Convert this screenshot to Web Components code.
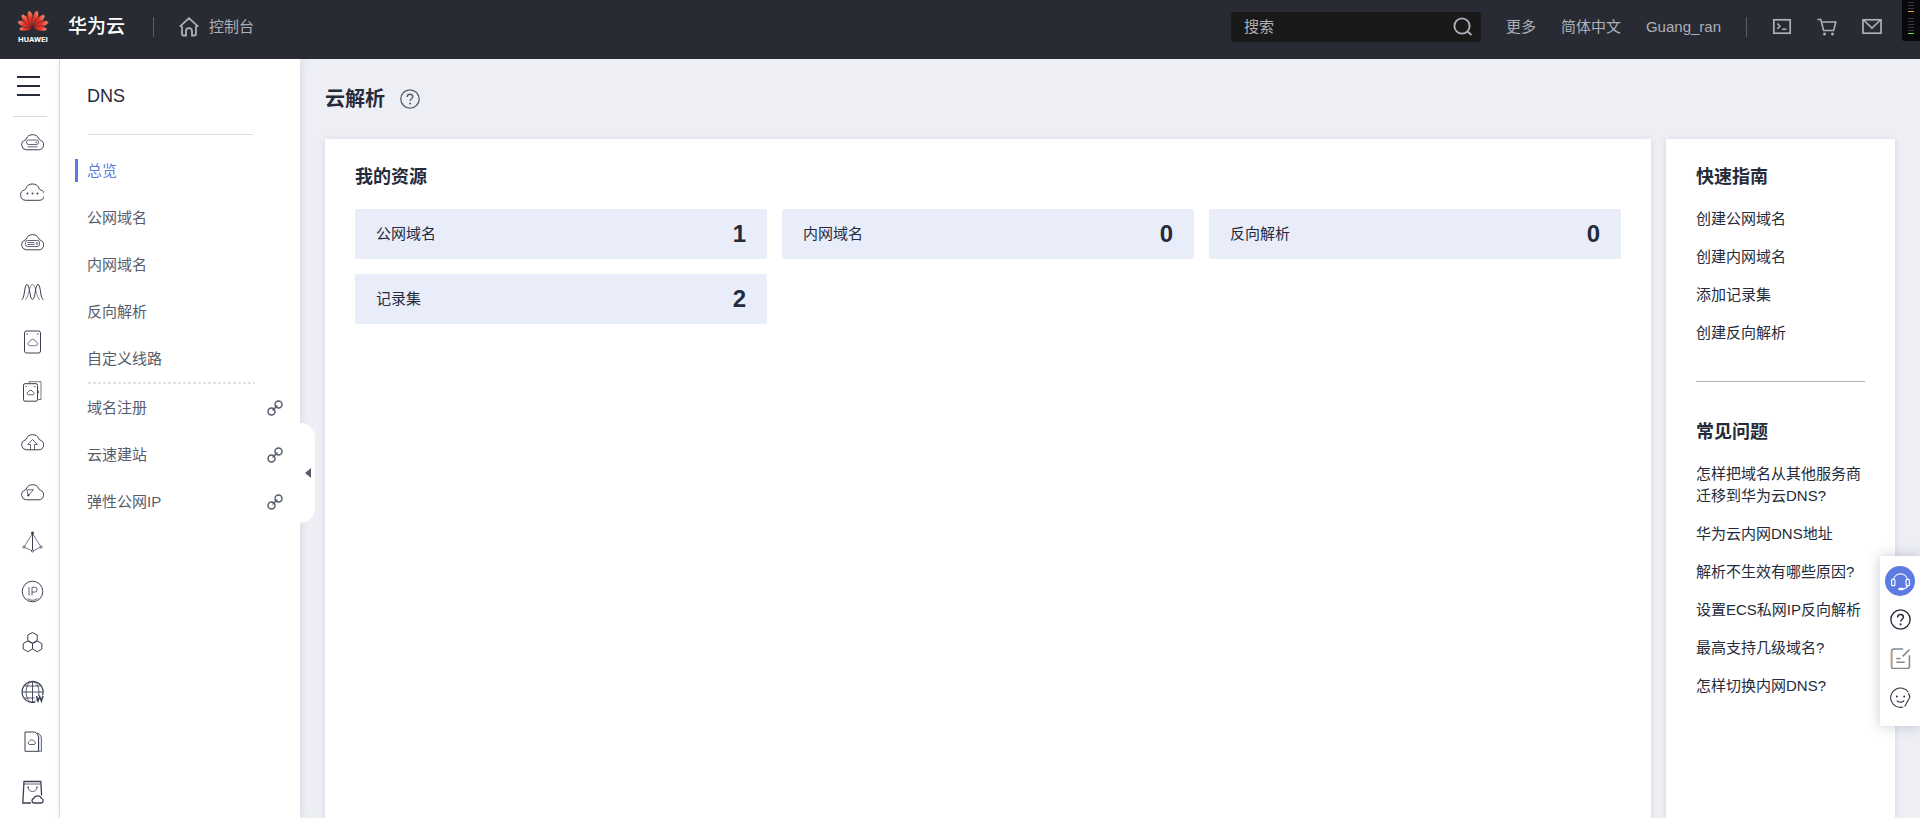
<!DOCTYPE html>
<html lang="zh-CN">
<head>
<meta charset="utf-8">
<title>云解析 - 控制台</title>
<style>
  html, body { margin: 0; min-height: 100%; }
  body {
    background: #eeeff5;
    color: #252b3a;
    font: 15px/22px "Liberation Sans", "Noto Sans CJK SC", sans-serif;
  }
</style>
</head>
<body>
<dns-console></dns-console>

<script>
const RESET = `
  *, *::before, *::after { box-sizing: border-box; }
  a { color: inherit; text-decoration: none; }
  button { border: 0; background: none; padding: 0; margin: 0; color: inherit; font: inherit; cursor: pointer; }
  ul { list-style: none; margin: 0; padding: 0; }
  h1, h2, p { margin: 0; font: inherit; }
  svg { display: block; fill: none; stroke: currentColor; }
`;

class BaseElement extends HTMLElement {
  connectedCallback() {
    if (this.shadowRoot) return;
    this.attachShadow({ mode: 'open' }).innerHTML = `<style>${RESET}${this.css()}</style>${this.html()}`;
  }
}

const CLOUD = 'M6.300 19.800h12.400a5 5 0 0 0 1.600-9.700 1.500 1.500 0 0 1-1.300-1.100A6.900 6.900 0 0 0 6.200 9 1.500 1.500 0 0 1 5 10.100a5 5 0 0 0 1.300 9.700z';

/* Each entry is [view box size, markup]. */
const ICONS = {
  home: [20, '<path stroke-width="1.800" d="M3 9v8.300a1.200 1.200 0 0 0 1.200 1.200H7v-4.300a3 3 0 0 1 6 0v4.300h2.800a1.200 1.200 0 0 0 1.200-1.200V9M.8 9.600 10 1.200l9.200 8.400"/>'],
  search: [20, '<circle cx="9" cy="9" r="7.600" stroke-width="1.900"/><path stroke-width="1.900" d="m14.500 14.500 4 3.500"/>'],
  terminal: [20, '<rect x="1.800" y="2.800" width="16.400" height="13.400" stroke-width="1.700"/><path stroke-width="1.500" d="m5.300 6.500 2.700 2.700-2.700 2.700M10 12.300H14.500"/>'],
  cart: [20, '<path stroke-width="1.600" d="M.5 2.500h3.300l2.800 11h10l2.200-8.500H5.500"/><circle cx="7.500" cy="17" r="1.500" fill="currentColor" stroke="none"/><circle cx="15.500" cy="17" r="1.500" fill="currentColor" stroke="none"/>'],
  mail: [20, '<rect x="1" y="2.800" width="18" height="13.400" stroke-width="1.700"/><path stroke-width="1.700" d="m1.500 3 8.500 8 8.500-8"/>'],
  link: [16, '<g stroke-width="1.500"><circle cx="4.500" cy="11.500" r="3.500"/><circle cx="11.500" cy="4.500" r="3.500"/><path d="m5.500 10.500 5-5"/></g>'],
  help: [20, '<circle cx="10" cy="10" r="9.200" stroke-width="1.300"/><path stroke-width="1.400" d="M7.200 8c0-1.700 1.200-2.700 2.800-2.700s2.800 1 2.800 2.500c0 1.900-2.700 2-2.700 4.200"/><circle cx="10.100" cy="14.600" r="1" fill="currentColor" stroke="none"/>'],
  ecs: [24, `<path d="${CLOUD}"/><rect x="6.500" y="10" width="12" height="4.500" rx="2" stroke-width=".8"/><path stroke-width=".8" d="M7.500 16.800h10"/><path d="M15.500 12.300h1.500"/>`],
  dots: [24, '<path d="M5.800 20.300h13.400a5.300 5.300 0 0 0 1.400-10.400 1.500 1.500 0 0 1-1.300-1.100 7.200 7.200 0 0 0-13.600 0 1.500 1.500 0 0 1-1.200 1.100 5.300 5.300 0 0 0 1.300 10.400z"/><g fill="currentColor" stroke="none"><circle cx="7.500" cy="13.500" r="1"/><circle cx="12.500" cy="13.500" r="1"/><circle cx="17.500" cy="13.500" r="1"/></g>'],
  bms: [24, `<path d="${CLOUD}"/><rect x="5.500" y="10.500" width="14" height="6" rx="2" stroke-width=".8"/><path stroke-width=".8" d="M7.500 12.500h7M7.500 14.500h7"/><circle cx="17" cy="13.500" r="1" stroke-width=".7"/>`],
  scaling: [24, '<path d="M1.500 19.500C5 19.500 4 4.500 7 4.500s2.500 15 5.500 15 2.500-15 5.500-15 2 15 5.500 15"/><path stroke-width=".6" d="M5 19.500c3.500 0 4-15 7.500-15s4 15 7.500 15"/>'],
  disk: [24, '<rect x="4.500" y="1" width="16" height="22" rx="2"/><path stroke-width=".7" d="M9.500 15.700h6.300a2 2 0 0 0 .3-3.900 3.500 3.500 0 0 0-6.600 0 2 2 0 0 0 0 3.900z"/><path d="M6.500 4h1.500M17 4h1.500"/>'],
  backup: [24, '<path stroke-width=".7" d="M9 3.500V1.700h12v17.800h-3"/><rect x="3.500" y="3.700" width="14" height="17.500" rx="1.500"/><path stroke-width=".8" d="M8 14.800h5.200a1.500 1.500 0 0 0 0-2.700 2.800 2.800 0 0 0-5.200 0 1.500 1.500 0 0 0 0 2.700zM18 10.500a2 2 0 0 1 0 2.800M5.500 6.500H7M14 6.500h1.500"/>'],
  upload: [24, `<path d="${CLOUD}"/><path stroke-width=".8" d="M10.500 19.500v-5H7.800l4.700-5 4.700 5h-2.700v5"/>`],
  cdn: [24, `<path d="${CLOUD}"/><path stroke-width=".8" d="m6.800 9 1.400 6.500 5.300-5.800-5.500.2"/><circle cx="8.300" cy="15.300" r=".7" fill="currentColor"/>`],
  pyramid: [24, '<path stroke-width=".7" d="M12.500 3.500 4 17M12.500 3.500 21 17M4 17l8.500 4 8.500-4"/><path d="M12.500 4v16.500"/><g fill="#fff" stroke-width=".8"><circle cx="4" cy="17" r="1.100"/><circle cx="21" cy="17" r="1.100"/><circle cx="12.500" cy="21" r="1.100"/></g><circle cx="12.500" cy="3" r="1.500" fill="currentColor" stroke="none"/>'],
  ip: [24, '<circle cx="12.500" cy="11.500" r="10.300"/><path stroke-width=".8" d="M9 7v8.500M12 15.500V7.300h2.700a2.300 2.300 0 0 1 0 4.800H12M7.500 18.500a8.500 8.500 0 0 0 10 0"/>'],
  hex: [24, '<path d="M12.500 2.500 17.200 5v5.500l-4.700 2.500-4.700-2.500V5zM7.800 11l4.700 2.500V19l-4.700 2.700L3.200 19v-5.500zM17.200 11l4.600 2.500V19l-4.600 2.700-4.700-2.700v-5.500z"/>'],
  globe: [24, '<path stroke-width="1.200" d="M15 22.200a10.500 10.500 0 1 1 7.600-7"/><ellipse cx="12.500" cy="12" rx="6.500" ry="10.300" stroke-width=".8"/><path stroke-width=".9" d="M12.500 1.500v20.700M2 12h21M4.500 6h16M4.500 18h10"/><path stroke="#fff" stroke-width="5" d="M17 18.500h6.500"/><path stroke-width="1.500" d="m16.500 16 1.500 5 1.700-4.500 1.700 4.500 1.600-5"/>'],
  file: [24, '<path fill="#dfe1e8" stroke-width=".7" d="M17 3c3 .5 4.500 3 4.500 6v12.300h-4z"/><path fill="#fff" d="M5 2h9.500c2.500.7 4 3 4 6v13.300H5z"/><path stroke-width=".8" d="M9.300 14.500h5a1.600 1.600 0 0 0 .1-3 2.900 2.900 0 0 0-5.200 0 1.600 1.600 0 0 0 .1 3z"/>'],
  bag: [24, '<path stroke-width="1.300" d="M11 23H2.800L4 1.500h16.800l.8 14"/><path stroke-width=".8" d="M4 4h17M8 7c0 6 9 6 9 0M7 7h2M16 7h2"/><path stroke-width="1.300" d="M14 23h7a2.300 2.300 0 0 0 .5-4.500 4.200 4.200 0 0 0-7.800 0A2.300 2.300 0 0 0 14 23z"/>'],
  headset: [20, '<g stroke-width="1.100"><path d="M3.200 8.500a6.900 6.900 0 0 1 13.600 0M16.800 14c-.5 1.700-2 2.800-4.300 3"/><rect x="1.500" y="8" width="3.200" height="6" rx="1"/><rect x="15.300" y="8" width="3.200" height="6" rx="1"/></g><rect x="8" y="16" width="5" height="2.400" rx="1.200" fill="currentColor" stroke="none"/>'],
  edit: [20, '<g stroke="#858a92" stroke-width="1.500"><path d="M12.500 1h-9a2 2 0 0 0-2 2v14.500a2 2 0 0 0 2 2h13a2 2 0 0 0 2-2V7"/><path d="M1.500 3v14.500" stroke="#cf9d63"/><path d="M6 10h4M6 13.500h8M12 8l6.500-6.500"/></g>'],
  smile: [20, '<g stroke-width="1"><path d="M12.500 19a9.200 9.200 0 1 1 5-14"/><path d="M6.500 13c1.500 2 5.500 2 7 0M14 18.500l5-9-1.500-3.500"/></g><circle cx="6.500" cy="9" r=".9" fill="currentColor" stroke="none"/><circle cx="13.500" cy="9" r=".9" fill="currentColor" stroke="none"/>'],
};

class UiIcon extends BaseElement {
  css() {
    return `:host { display: block; flex: none; width: 20px; height: 20px; } svg { width: 100%; height: 100%; }`;
  }
  html() {
    const [size, markup] = ICONS[this.getAttribute('name')];
    return `<svg viewBox="0 0 ${size} ${size}" aria-hidden="true">${markup}</svg>`;
  }
}

class BrandLogo extends BaseElement {
  css() {
    return `
      :host { display: flex; align-items: center; gap: 18px; color: #fff; }
      .mark { display: flex; flex-direction: column; align-items: center; width: 34px; }
      svg { width: 34px; height: 25px; }
      .mark span { font: bold 8px/11px Roboto, "Liberation Sans", sans-serif; }
      .name { font-size: 19px; font-weight: 500; line-height: 28px; }`;
  }
  html() {
    const petal = 'M0-1C-4.500-6-5.200-14-2-21Q0-23.500 2-21C5.200-14 4.500-6 0-1z';
    const petals = [[-98, .86], [-70, 1], [-42, 1.040], [-14, 1.040], [14, 1.040], [42, 1.040], [70, 1], [98, .86]]
      .map(([a, s]) => `<path transform="rotate(${a}) scale(${s})" d="${petal}"/>`).join('');
    return `
      <div class="mark">
        <svg viewBox="-23 -25 46 34" aria-hidden="true">
          <defs><radialGradient id="g" gradientUnits="userSpaceOnUse" cx="3" cy="-22" r="24">
            <stop offset="0" stop-color="#f5a380"/><stop offset=".4" stop-color="#e8382b"/><stop offset="1" stop-color="#cc1a1c"/>
          </radialGradient></defs>
          <g fill="url(#g)" stroke="#282b33" stroke-width=".8">${petals}</g>
        </svg>
        <span>HUAWEI</span>
      </div>
      <span class="name">华为云</span>`;
  }
}

class TopBar extends BaseElement {
  css() {
    return `
      :host { display: block; height: 59px; background: #282b33; color: #adb0b8; position: relative; }
      header { display: flex; align-items: center; height: 100%; padding: 0 38px 5px 16px; }
      .sep { width: 1px; height: 20px; background: #5b5e66; }
      .home { display: flex; align-items: center; gap: 10px; }
      .brand { margin-right: 28px; }
      .sep.first { margin-right: 25px; }
      form { display: flex; align-items: center; width: 250px; height: 30px; margin-left: auto; padding: 0 8px 0 13px; background: #191919; border-radius: 3px; }
      input { flex: 1; min-width: 0; border: 0; padding: 0; outline: 0; background: none; color: #adb0b8; font: inherit; }
      input::placeholder { color: #adb0b8; opacity: 1; }
      nav { display: flex; align-items: center; gap: 25px; margin: 0 25px; }
      .tools { display: flex; align-items: center; gap: 25px; margin-left: 25px; }
      .meter { position: absolute; top: 0; right: 0; display: flex; flex-direction: column; align-items: center; gap: 2px; width: 18px; height: 41px; padding-top: 2px; background: #08090b; border-bottom-left-radius: 3px; }
      .meter i { width: 6px; height: 1px; background: #37393d; }
      .meter .warn { background: #f0a030; margin-bottom: 4px; }
      .meter .ok { background: #7ddc35; }`;
  }
  html() {
    const dim = '<i></i>';
    return `
      <header>
        <brand-logo class="brand"></brand-logo>
        <span class="sep first"></span>
        <a class="home" href="#"><ui-icon name="home"></ui-icon>控制台</a>
        <form role="search">
          <input type="text" placeholder="搜索" aria-label="搜索">
          <button type="button" aria-label="搜索"><ui-icon name="search"></ui-icon></button>
        </form>
        <nav><a href="#">更多</a><a href="#">简体中文</a><a href="#">Guang_ran</a></nav>
        <span class="sep"></span>
        <div class="tools">
          <button type="button" aria-label="终端"><ui-icon name="terminal"></ui-icon></button>
          <button type="button" aria-label="购物车"><ui-icon name="cart"></ui-icon></button>
          <button type="button" aria-label="消息"><ui-icon name="mail"></ui-icon></button>
        </div>
      </header>
      <div class="meter">${dim.repeat(3)}<i class="warn"></i>${dim.repeat(5)}<i class="ok"></i></div>`;
  }
}

class ServiceRail extends BaseElement {
  css() {
    return `
      :host { display: block; width: 60px; flex: none; background: #fff; border-right: 1px solid #dadce4; }
      .menu { display: flex; flex-direction: column; gap: 7px; margin: 17px 0 0 17px; }
      .menu i { width: 23px; height: 2px; background: #252b3a; }
      hr { margin: 20px 12px 0 13px; border: 0; height: 1px; background: #d9dbe4; }
      li { height: 50px; display: flex; align-items: center; justify-content: center; padding-left: 5px; }
      li a { display: block; color: #3a4052; }
      ui-icon { width: 24px; height: 24px; }`;
  }
  html() {
    const items = [['ecs', '弹性云服务器'], ['dots', '云服务'], ['bms', '裸金属服务器'], ['scaling', '弹性伸缩'], ['disk', '云硬盘'],
      ['backup', '云备份'], ['upload', '对象存储'], ['cdn', '虚拟私有云'], ['pyramid', '负载均衡'], ['ip', '弹性公网'],
      ['hex', '区块链'], ['globe', '域名'], ['file', '文件'], ['bag', '云商店']];
    return `
      <button class="menu" type="button" aria-label="服务列表"><i></i><i></i><i></i></button>
      <hr>
      <ul>${items.map(([icon, label]) => `<li><a href="#" aria-label="${label}"><ui-icon name="${icon}"></ui-icon></a></li>`).join('')}</ul>`;
  }
}

class NavItem extends BaseElement {
  css() {
    return `
      :host { display: block; padding: 12px 17px 12px 15px; color: #575d6c; }
      a { display: flex; align-items: center; justify-content: space-between; height: 23px; padding-left: 9px; border-left: 3px solid transparent; }
      :host([active]) { color: #5e7ce0; }
      :host([active]) a { border-color: #5e7ce0; }
      ui-icon { width: 16px; height: 16px; }`;
  }
  html() {
    return `<a href="#"><slot></slot>${this.hasAttribute('external') ? '<ui-icon name="link"></ui-icon>' : ''}</a>`;
  }
}

class SideNav extends BaseElement {
  css() {
    return `
      :host { display: block; position: relative; flex: none; width: 240px; padding-top: 25px; background: #fff; box-shadow: 1px 0 8px rgba(40, 50, 90, .12); }
      h2 { margin-left: 27px; font-size: 18px; line-height: 24px; }
      hr { width: 165px; height: 1px; margin: 26px 0 12px 28px; border: 0; background: #dcdde6; }
      .dash { width: 167px; height: 2px; margin-left: 28px; background: repeating-linear-gradient(90deg, #dfe1e6 0 3px, transparent 3px 5px); }
      .fold { position: absolute; left: 100%; top: 364px; display: flex; align-items: center; justify-content: center; width: 15px; height: 100px; background: #fff; border-radius: 0 15px 15px 0; }
      .fold svg { width: 6px; height: 10px; fill: #575d6c; stroke: none; }`;
  }
  html() {
    return `
      <h2>DNS</h2>
      <hr>
      <nav aria-label="DNS">
        <nav-item active>总览</nav-item>
        <nav-item>公网域名</nav-item>
        <nav-item>内网域名</nav-item>
        <nav-item>反向解析</nav-item>
        <nav-item>自定义线路</nav-item>
        <div class="dash"></div>
        <nav-item external>域名注册</nav-item>
        <nav-item external>云速建站</nav-item>
        <nav-item external>弹性公网IP</nav-item>
      </nav>
      <button class="fold" type="button" aria-label="收起"><svg viewBox="0 0 6 10"><path d="M6 0v10L0 5z"/></svg></button>`;
  }
}

class ResourceTile extends BaseElement {
  css() {
    return `
      :host { display: block; }
      a { display: flex; align-items: center; justify-content: space-between; height: 50px; padding: 0 21px; background: #e9edfa; border-radius: 2px; }
      b { font-size: 24px; line-height: 30px; }`;
  }
  html() {
    return `<a href="#"><slot></slot><b>${this.getAttribute('count')}</b></a>`;
  }
}

class PanelCard extends BaseElement {
  css() {
    return `:host { display: block; background: #fff; padding: 25px 30px; box-shadow: 0 1px 6px rgba(40, 50, 90, .14); }`;
  }
  html() { return '<slot></slot>'; }
}

class LinkGroup extends BaseElement {
  css() {
    return `
      :host { display: block; }
      h2 { font-size: 18px; font-weight: bold; line-height: 26px; margin-bottom: 18px; }
      div { display: flex; flex-direction: column; gap: 16px; }
      ::slotted(a) { display: block; color: inherit; text-decoration: none; }`;
  }
  html() {
    return `<h2>${this.getAttribute('heading')}</h2><div><slot></slot></div>`;
  }
}

class FloatTools extends BaseElement {
  css() {
    return `
      :host { position: fixed; right: 0; top: 556px; display: flex; flex-direction: column; align-items: center; gap: 18px; width: 40px; height: 170px; padding-top: 10px; background: #fff; box-shadow: 0 0 12px rgba(40, 50, 90, .25); color: #252b3a; }
      .service { display: flex; align-items: center; justify-content: center; width: 30px; height: 30px; margin-bottom: -5px; border-radius: 50%; background: #5e7ce0; color: #fff; }
      ui-icon { width: 21px; height: 21px; }`;
  }
  html() {
    return `
      <button class="service" type="button" aria-label="客服"><ui-icon name="headset"></ui-icon></button>
      <button type="button" aria-label="帮助"><ui-icon name="help"></ui-icon></button>
      <button type="button" aria-label="反馈"><ui-icon name="edit"></ui-icon></button>
      <button type="button" aria-label="评价"><ui-icon name="smile"></ui-icon></button>`;
  }
}

class DnsConsole extends BaseElement {
  css() {
    return `
      :host { display: flex; flex-direction: column; min-height: 100vh; }
      .body { display: flex; flex: 1; }
      main { flex: 1; min-width: 0; display: flex; flex-direction: column; padding: 26px 25px 0; }
      .title { display: flex; align-items: center; gap: 15px; margin-bottom: 26px; color: #575d6c; }
      h1 { font-size: 20px; font-weight: bold; line-height: 28px; color: #252b3a; }
      .panels { flex: 1; display: grid; grid-template-columns: minmax(0, 1fr) 229px; gap: 15px; }
      .resources h2 { font-size: 18px; font-weight: bold; line-height: 26px; margin-bottom: 19px; }
      .tiles { display: grid; grid-template-columns: repeat(3, 1fr); gap: 15px; }
      hr { height: 1px; margin: 37px 0; border: 0; background: #adb0b8; }`;
  }
  html() {
    return `
      <top-bar></top-bar>
      <div class="body">
        <service-rail></service-rail>
        <side-nav></side-nav>
        <main>
          <div class="title"><h1>云解析</h1><button type="button" aria-label="帮助"><ui-icon name="help"></ui-icon></button></div>
          <div class="panels">
            <panel-card class="resources">
              <h2>我的资源</h2>
              <div class="tiles">
                <resource-tile count="1">公网域名</resource-tile>
                <resource-tile count="0">内网域名</resource-tile>
                <resource-tile count="0">反向解析</resource-tile>
                <resource-tile count="2">记录集</resource-tile>
              </div>
            </panel-card>
            <panel-card>
              <link-group heading="快速指南">
                <a href="#">创建公网域名</a>
                <a href="#">创建内网域名</a>
                <a href="#">添加记录集</a>
                <a href="#">创建反向解析</a>
              </link-group>
              <hr>
              <link-group heading="常见问题">
                <a href="#">怎样把域名从其他服务商迁移到华为云DNS?</a>
                <a href="#">华为云内网DNS地址</a>
                <a href="#">解析不生效有哪些原因?</a>
                <a href="#">设置ECS私网IP反向解析</a>
                <a href="#">最高支持几级域名?</a>
                <a href="#">怎样切换内网DNS?</a>
              </link-group>
            </panel-card>
          </div>
        </main>
      </div>
      <float-tools></float-tools>`;
  }
}

customElements.define('ui-icon', UiIcon);
customElements.define('brand-logo', BrandLogo);
customElements.define('top-bar', TopBar);
customElements.define('service-rail', ServiceRail);
customElements.define('nav-item', NavItem);
customElements.define('side-nav', SideNav);
customElements.define('resource-tile', ResourceTile);
customElements.define('panel-card', PanelCard);
customElements.define('link-group', LinkGroup);
customElements.define('float-tools', FloatTools);
customElements.define('dns-console', DnsConsole);
</script>
</body>
</html>
